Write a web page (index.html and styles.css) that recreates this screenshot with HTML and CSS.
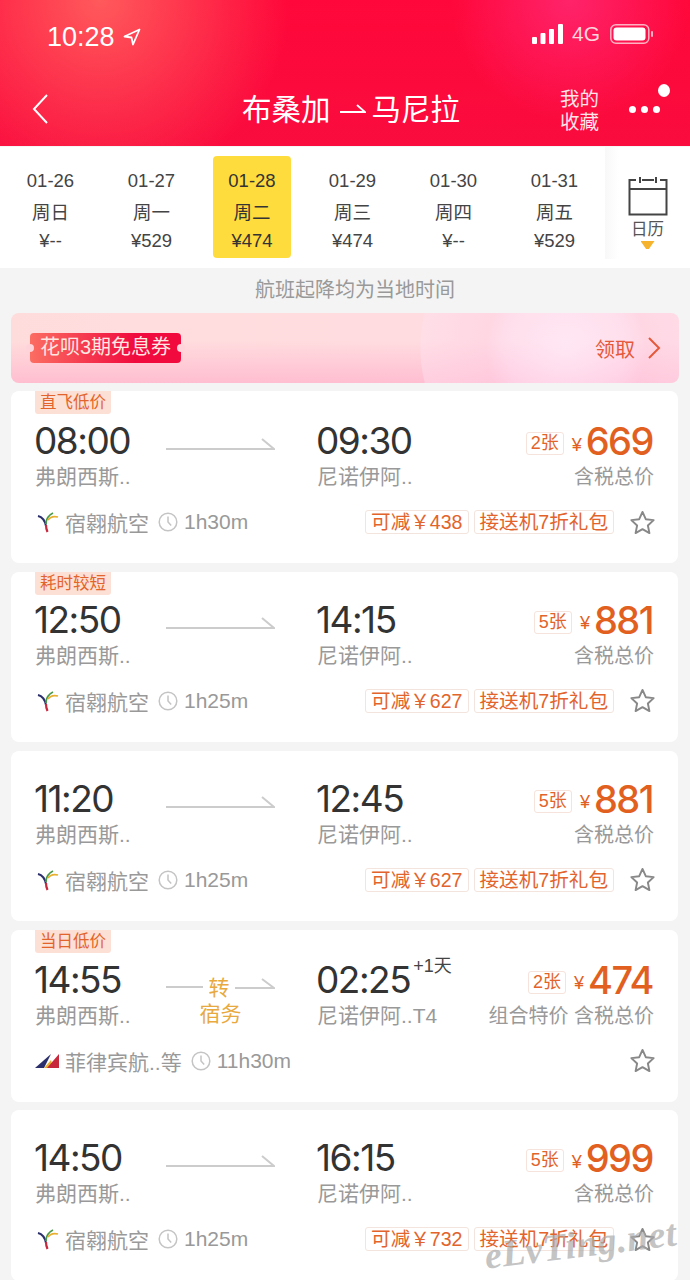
FILE: index.html
```html
<!DOCTYPE html>
<html lang="zh-CN">
<head>
  <meta charset="UTF-8">
  <meta name="viewport" content="width=device-width, initial-scale=1.0">
  <title>布桑加 - 马尼拉</title>
  <link rel="stylesheet" href="styles.css">
</head>
<body>
  <svg class="defs" width="0" height="0">
    <symbol id="arrow" viewBox="0 0 109 14"><path d="M0 12h108L96 2" fill="none" stroke="#ccc" stroke-width="2"/></symbol>
    <symbol id="clock" viewBox="0 0 20 20"><circle cx="10" cy="10" r="8.8" fill="none" stroke="#c4c4c4" stroke-width="1.5"/><path d="M10 4.5V10l3.2 3.4" fill="none" stroke="#c4c4c4" stroke-width="1.5"/></symbol>
    <symbol id="star" viewBox="0 0 26 25"><path d="M13 1.500l3.400 7.600 8.200.9-6 5.600 1.600 7.900-7.200-4.100-7.200 4.100 1.600-7.900-6-5.600 8.200-.9z" fill="none" stroke="#888" stroke-width="2" stroke-linejoin="round"/></symbol>
    <symbol id="sw" viewBox="0 0 22 22">
      <path d="M1 5c4 1 7 5 8 10" fill="none" stroke="#2b2f6b" stroke-width="2"/>
      <path d="M9 14c0 3 .5 5 1.500 7" fill="none" stroke="#c8283c" stroke-width="2.200"/>
      <path d="M9 13c0-5 3-9 7-11" fill="none" stroke="#4a9a4a" stroke-width="1.800"/>
      <path d="M11 9c2-3 6-4 10-3" fill="none" stroke="#e8b030" stroke-width="1.800"/>
    </symbol>
  </svg>

  <header class="head">
    <div class="status">
      <div class="status-left">
        <span class="clock-text">10:28</span>
        <svg class="loc" viewBox="0 0 18 18"><path d="M16.500 1.500L1.500 8.500l7 1 1.500 7z" fill="none" stroke="#fff" stroke-width="1.800" stroke-linejoin="round"/></svg>
      </div>
      <div class="status-right">
        <svg class="signal" viewBox="0 0 31 20"><rect x="0" y="13" width="5" height="7" rx="1"/><rect x="8.500" y="9" width="5" height="11" rx="1"/><rect x="17" y="5" width="5" height="15" rx="1"/><rect x="26" y="0" width="5" height="20" rx="1"/></svg>
        <span class="net">4G</span>
        <svg class="battery" viewBox="0 0 43 20"><rect x=".8" y=".8" width="38" height="18.400" rx="5" fill="none" stroke="#ffb3c2" stroke-width="1.500"/><rect x="3.500" y="3.500" width="32" height="13" rx="3" fill="#fff"/><rect x="41" y="7" width="2" height="6" rx="1" fill="#ffb3c2"/></svg>
      </div>
    </div>
    <nav class="nav">
      <svg class="back" viewBox="0 0 16 30"><path d="M15 1L2 15l13 14" fill="none" stroke="#fff" stroke-width="2"/></svg>
      <div class="route">布桑加<svg class="route-arrow" viewBox="0 0 26 10"><path d="M0 8h25L17 1" fill="none" stroke="#fff" stroke-width="1.800"/></svg>马尼拉</div>
      <div class="fav">我的<br>收藏</div>
      <div class="more"><i></i><i></i><i></i><b class="more-dot"></b></div>
    </nav>
  </header>

  <section class="dates">
    <div class="day"><span>01-26</span><span>周日</span><span>¥--</span></div>
    <div class="day"><span>01-27</span><span>周一</span><span>¥529</span></div>
    <div class="day on"><span>01-28</span><span>周二</span><span>¥474</span></div>
    <div class="day"><span>01-29</span><span>周三</span><span>¥474</span></div>
    <div class="day"><span>01-30</span><span>周四</span><span>¥--</span></div>
    <div class="day"><span>01-31</span><span>周五</span><span>¥529</span></div>
    <div class="cal">
      <svg class="cal-icon" viewBox="0 0 40 40"><path d="M8 4H1.500v34.500h37V4H32M12 1v6M28 1v6M14 4h12M1.500 13h37" fill="none" stroke="#444" stroke-width="2"/></svg>
      <span>日历</span>
      <i class="cal-tri"></i>
    </div>
  </section>

  <p class="notice">航班起降均为当地时间</p>

  <div class="banner">
    <span class="coupon">花呗3期免息券</span>
    <span class="take">领取<svg viewBox="0 0 14 24"><path d="M2 2l10 10L2 22" fill="none" stroke="#e4593a" stroke-width="2"/></svg></span>
  </div>

  <main class="list">
    <article class="card tall">
      <span class="flag">直飞低价</span>
      <div class="row-main">
        <div class="leg dep"><div class="time">08:00</div><div class="port">弗朗西斯..</div></div>
        <svg class="line"><use href="#arrow"/></svg>
        <div class="leg"><div class="time">09:30</div><div class="port">尼诺伊阿..</div></div>
        <div class="fare"><div class="fare-top"><span class="left">2张</span><span class="yen">¥</span><span class="price">669</span></div><div class="port">含税总价</div></div>
      </div>
      <div class="row-sub">
        <svg class="logo"><use href="#sw"/></svg><span class="air">宿翱航空</span>
        <svg class="clk"><use href="#clock"/></svg><span class="air">1h30m</span>
        <span class="tags"><span class="tag">可减￥438</span><span class="tag">接送机7折礼包</span></span>
        <svg class="star"><use href="#star"/></svg>
      </div>
    </article>

    <article class="card">
      <span class="flag">耗时较短</span>
      <div class="row-main">
        <div class="leg dep"><div class="time">12:50</div><div class="port">弗朗西斯..</div></div>
        <svg class="line"><use href="#arrow"/></svg>
        <div class="leg"><div class="time">14:15</div><div class="port">尼诺伊阿..</div></div>
        <div class="fare"><div class="fare-top"><span class="left">5张</span><span class="yen">¥</span><span class="price">881</span></div><div class="port">含税总价</div></div>
      </div>
      <div class="row-sub">
        <svg class="logo"><use href="#sw"/></svg><span class="air">宿翱航空</span>
        <svg class="clk"><use href="#clock"/></svg><span class="air">1h25m</span>
        <span class="tags"><span class="tag">可减￥627</span><span class="tag">接送机7折礼包</span></span>
        <svg class="star"><use href="#star"/></svg>
      </div>
    </article>

    <article class="card">
      <div class="row-main">
        <div class="leg dep"><div class="time">11:20</div><div class="port">弗朗西斯..</div></div>
        <svg class="line"><use href="#arrow"/></svg>
        <div class="leg"><div class="time">12:45</div><div class="port">尼诺伊阿..</div></div>
        <div class="fare"><div class="fare-top"><span class="left">5张</span><span class="yen">¥</span><span class="price">881</span></div><div class="port">含税总价</div></div>
      </div>
      <div class="row-sub">
        <svg class="logo"><use href="#sw"/></svg><span class="air">宿翱航空</span>
        <svg class="clk"><use href="#clock"/></svg><span class="air">1h25m</span>
        <span class="tags"><span class="tag">可减￥627</span><span class="tag">接送机7折礼包</span></span>
        <svg class="star"><use href="#star"/></svg>
      </div>
    </article>

    <article class="card tall">
      <span class="flag">当日低价</span>
      <div class="row-main">
        <div class="leg dep"><div class="time">14:55</div><div class="port">弗朗西斯..</div></div>
        <div class="transfer">
          <div class="transfer-top"><i></i>转<svg viewBox="0 0 40 12"><path d="M0 10h39L27 1" fill="none" stroke="#ccc" stroke-width="2"/></svg></div>
          <div>宿务</div>
        </div>
        <div class="leg"><div class="time">02:25<sup>+1天</sup></div><div class="port">尼诺伊阿..T4</div></div>
        <div class="fare"><div class="fare-top"><span class="left">2张</span><span class="yen">¥</span><span class="price">474</span></div><div class="port">组合特价 含税总价</div></div>
      </div>
      <div class="row-sub">
        <svg class="logo logo-pal" viewBox="0 0 24 16"><path d="M0 15L16 1l-7 14z" fill="#2b2f6b"/><path d="M9 15l7-8 2 8z" fill="#e8b030"/><path d="M12 15L24 1v14z" fill="#c8283c"/></svg><span class="air">菲律宾航..等</span>
        <svg class="clk"><use href="#clock"/></svg><span class="air">11h30m</span>
        <svg class="star"><use href="#star"/></svg>
      </div>
    </article>

    <article class="card">
      <div class="row-main">
        <div class="leg dep"><div class="time">14:50</div><div class="port">弗朗西斯..</div></div>
        <svg class="line"><use href="#arrow"/></svg>
        <div class="leg"><div class="time">16:15</div><div class="port">尼诺伊阿..</div></div>
        <div class="fare"><div class="fare-top"><span class="left">5张</span><span class="yen">¥</span><span class="price">999</span></div><div class="port">含税总价</div></div>
      </div>
      <div class="row-sub">
        <svg class="logo"><use href="#sw"/></svg><span class="air">宿翱航空</span>
        <svg class="clk"><use href="#clock"/></svg><span class="air">1h25m</span>
        <span class="tags"><span class="tag">可减￥732</span><span class="tag">接送机7折礼包</span></span>
        <svg class="star"><use href="#star"/></svg>
      </div>
    </article>
  </main>

  <div class="mark">eLvTing.net</div>
</body>
</html>
```

FILE: styles.css
```css
* {
  margin: 0;
  padding: 0;
  box-sizing: border-box;
}
html, body {
  height: 1280px;
  overflow: hidden;
}
body {
  position: relative;
  background: #f4f4f4;
  font-family: "Liberation Sans", "Noto Sans CJK SC", sans-serif;
  color: #333;
}
.defs {
  position: absolute;
}

/* header */
.head {
  height: 147px;
  color: #fff;
  border-bottom: 1px solid #f5f5f5;
  background:
    radial-gradient(circle at 570px 0, rgba(255, 40, 115, .85), rgba(255, 40, 115, 0) 120px),
    radial-gradient(circle at 100px 0, rgba(255, 110, 100, .8), rgba(255, 90, 90, 0) 190px),
    linear-gradient(#ff073a, #fa0c3e);
}
.status {
  height: 74px;
  padding: 22px 37px 0 47px;
  display: flex;
  justify-content: space-between;
  align-items: flex-start;
}
.status-left,
.status-right {
  display: flex;
  align-items: center;
}
.clock-text {
  font-size: 27px;
  line-height: 30px;
}
.loc {
  width: 18px;
  height: 18px;
  margin-left: 8px;
}
.signal {
  width: 31px;
  height: 20px;
  fill: #fff;
}
.net {
  font-size: 21px;
  margin: 0 10px 0 9px;
  color: #ffd5dc;
}
.battery {
  width: 43px;
  height: 20px;
}
.nav {
  height: 72px;
  display: grid;
  grid-template-columns: 242px 1fr auto auto;
  align-items: center;
  position: relative;
  padding-right: 30px;
}
.back {
  width: 16px;
  height: 30px;
  margin: 0 0 2px 32px;
}
.route {
  font-size: 29.500px;
  display: flex;
  align-items: center;
  margin-bottom: 6px;
}
.route-arrow {
  width: 26px;
  height: 10px;
  margin: 3px 6px 0 9px;
}
.fav {
  font-size: 19.500px;
  line-height: 23px;
  margin: 2px 30px 0 0;
  color: #ffe3e8;
}
.more {
  display: flex;
  gap: 5px;
  margin-bottom: 2px;
}
.more i {
  width: 7px;
  height: 7px;
  border-radius: 50%;
  background: #fff;
}
.more-dot {
  position: absolute;
  right: 20px;
  top: 10px;
  width: 12px;
  height: 13px;
  border-radius: 50%;
  background: #fff;
}

/* date strip */
.dates {
  height: 121px;
  background: #fff;
  display: flex;
  padding-top: 9px;
}
.day {
  width: 101px;
  height: 102px;
  display: flex;
  flex-direction: column;
  align-items: center;
  padding-top: 9px;
  font-size: 18.500px;
  color: #444;
}
.day span {
  line-height: 31px;
}
.day span:first-child {
  line-height: 32px;
}
.day span:last-child {
  line-height: 26px;
}
.day.on {
  width: 78px;
  margin: 0 11px;
  background: #ffdc3e;
  border-radius: 4px;
  color: #333;
}
.cal {
  flex: 1;
  height: 112px;
  margin-top: -9px;
  display: flex;
  flex-direction: column;
  align-items: center;
  padding-top: 29px;
  font-size: 16.500px;
  color: #555;
  background: linear-gradient(90deg, #f8f8f8, #fff 14px);
}
.cal-icon {
  width: 40px;
  height: 40px;
}
.cal span {
  line-height: 24px;
  margin-top: 1px;
}
.cal-tri {
  width: 14px;
  height: 8px;
  background: #f5b32e;
  clip-path: polygon(0 0, 100% 0, 60% 100%, 40% 100%);
}

.notice {
  height: 45px;
  line-height: 45px;
  padding-left: 20px;
  text-align: center;
  font-size: 20px;
  color: #999;
}

/* banner */
.banner {
  height: 70px;
  margin: 0 11px 8px;
  padding: 0 18px 0 19px;
  border-radius: 8px;
  display: flex;
  justify-content: space-between;
  align-items: center;
  background:
    radial-gradient(circle at 555px 35px, rgba(255, 235, 250, .75) 0, rgba(255, 225, 245, .55) 60px, rgba(255, 210, 230, .5) 80px, rgba(255, 225, 240, .45) 145px, rgba(255, 225, 240, 0) 146px),
    linear-gradient(rgba(255, 255, 255, 0) 40%, rgba(255, 170, 200, .6)),
    linear-gradient(90deg, #ffdcdc, #ffdce2);
}
.coupon {
  position: relative;
  width: 151px;
  height: 30px;
  line-height: 29px;
  text-align: center;
  font-size: 20px;
  color: #ffe6e0;
  border-radius: 4px;
  background: linear-gradient(90deg, #fb6d62, #f00a3e 70%);
}
.coupon::before,
.coupon::after {
  content: "";
  position: absolute;
  top: 11px;
  width: 8px;
  height: 8px;
  border-radius: 50%;
  background: #ffd3da;
}
.coupon::before {
  left: -4px;
}
.coupon::after {
  right: -4px;
}
.take {
  display: flex;
  align-items: center;
  gap: 12px;
  font-size: 20px;
  color: #e4593a;
}
.take svg {
  width: 14px;
  height: 24px;
}

/* flight cards */
.list {
  display: flex;
  flex-direction: column;
  gap: 8.500px;
  padding: 0 12px 0 11px;
}
.card {
  position: relative;
  height: 170.500px;
  background: #fff;
  border-radius: 8px;
  padding: 28px 24px 0;
}
.card.tall {
  height: 172px;
  padding-top: 30px;
}
.flag {
  position: absolute;
  left: 24px;
  top: 0;
  width: 76px;
  height: 23px;
  line-height: 23px;
  text-align: center;
  font-size: 16.500px;
  color: #e2642c;
  background: #fde0d5;
  border-radius: 0 0 3px 3px;
}
.row-main {
  display: flex;
  align-items: flex-start;
}
.leg {
  flex: none;
  width: 150px;
}
.dep {
  width: 131px;
}
.time {
  font-family: Inter, "Liberation Sans", sans-serif;
  font-size: 37px;
  letter-spacing: -1.500px;
  line-height: 40px;
  margin-left: -1px;
  white-space: nowrap;
}
.time sup {
  font-family: "Liberation Sans", "Noto Sans CJK SC", sans-serif;
  font-size: 18px;
  letter-spacing: 0;
  line-height: 0;
  vertical-align: 21px;
  color: #444;
  margin-left: 3px;
}
.port {
  font-size: 21px;
  line-height: 30px;
  padding-top: 1px;
  color: #999;
  white-space: nowrap;
}
.fare .port {
  font-size: 20px;
}
.line {
  flex: none;
  width: 109px;
  height: 14px;
  margin: 16px 42px 0 0;
}
.transfer {
  flex: none;
  width: 109px;
  margin: 15px 42px 0 0;
  text-align: center;
  color: #e8a93e;
  font-size: 21px;
  line-height: 26px;
}
.transfer-top {
  display: flex;
  justify-content: space-between;
  align-items: center;
}
.transfer-top i {
  width: 37px;
  height: 2px;
  background: #ccc;
  margin-top: -2px;
}
.transfer-top svg {
  width: 40px;
  height: 12px;
  margin-top: -8px;
}
.fare {
  flex: 1;
  text-align: right;
}
.fare-top {
  height: 40px;
  display: flex;
  justify-content: flex-end;
  align-items: center;
}
.left {
  width: 38px;
  height: 23px;
  line-height: 21px;
  text-align: center;
  font-size: 18px;
  color: #e2642c;
  border: 1px solid #f6e3dc;
  border-radius: 3px;
  margin: 5px 8px 0 0;
}
.yen {
  font-size: 18px;
  color: #e2601f;
  margin: 8px 4px 0 0;
}
.price {
  font-family: Inter, "Liberation Sans", sans-serif;
  font-weight: 500;
  font-size: 38px;
  letter-spacing: -1.500px;
  line-height: 40px;
  margin-right: 1px;
  color: #e2601f;
}
.row-sub {
  display: flex;
  align-items: center;
  height: 32px;
  margin-top: 14px;
}
.logo {
  flex: none;
  width: 22px;
  height: 22px;
  margin: 0 6px 0 2px;
}
.logo-pal {
  width: 24px;
  margin-left: 0;
}
.air {
  font-size: 21px;
  color: #999;
  white-space: nowrap;
}
.clk {
  flex: none;
  width: 20px;
  height: 20px;
  margin: 0 6px 0 9px;
}
.tags {
  margin-left: auto;
  display: flex;
  gap: 5px;
}
.tag {
  height: 24px;
  line-height: 22px;
  padding: 0 5px;
  font-size: 19.600px;
  color: #e2642c;
  border: 1px solid #f3e4de;
  border-radius: 3px;
  white-space: nowrap;
}
.star {
  flex: none;
  width: 25px;
  height: 25px;
  margin: 0 -1px 0 16px;
}
.air + .star {
  margin-left: auto;
}

/* watermark */
.mark {
  position: absolute;
  left: 484px;
  top: 1222px;
  font-family: "Liberation Serif", serif;
  font-style: italic;
  font-weight: bold;
  font-size: 38px;
  letter-spacing: .5px;
  color: rgba(170, 170, 170, .7);
  transform: rotate(-7deg);
  white-space: nowrap;
}
```
